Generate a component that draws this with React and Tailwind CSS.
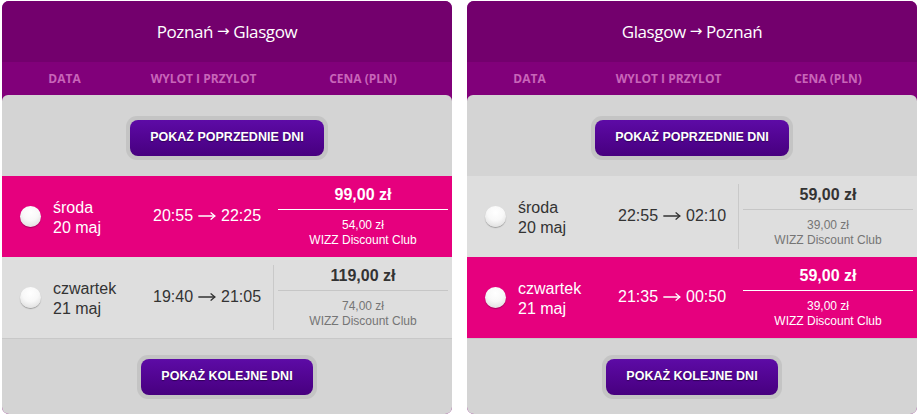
import React from "react";

const Arrow = ({ cls }) => (
  <span className={cls} style={{ fontFamily: '"DejaVu Sans", sans-serif' }}>→</span>
);

const TimeArrow = () => (
  <svg width="18" height="10" viewBox="0 0 18 10" className="mx-[5px] shrink-0" fill="none" stroke="currentColor" strokeWidth="1.3" strokeLinecap="round" strokeLinejoin="round">
    <path d="M0.8 5H16.8" />
    <path d="M13 1.8L16.8 5L13 8.2" />
  </svg>
);

const Radio = () => (
  <div className="w-[21px] h-[21px] rounded-full shrink-0 bg-[radial-gradient(circle_at_50%_30%,#ffffff_0%,#f8f8f8_45%,#d6d6d6_100%)] shadow-[0_1px_1px_rgba(0,0,0,0.3)]" />
);

const Button = ({ children, px }) => (
  <div className="rounded-[11px] bg-[#c4c4c4] p-[4px]">
    <div
      className={`h-[36px] rounded-[8px] bg-gradient-to-b from-[#5d0ba6] to-[#47007f] flex items-center justify-center text-white font-bold text-[12.5px] ${px}`}
      style={{ fontFamily: '"Liberation Sans", Arial, sans-serif', textShadow: "0 1px 1px rgba(0,0,0,0.4)" }}
    >
      {children}
    </div>
  </div>
);

const Time = ({ from, to }) => (
  <span className="flex items-center">
    {from}
    <TimeArrow />
    {to}
  </span>
);

const Row = ({ day, date, from, to, price, club, active }) => (
  <div
    className={`h-[81px] flex items-stretch ${active ? "bg-[#e6007e] text-white" : "bg-[#dedede] text-[#333]"}`}
    style={{ fontFamily: '"Liberation Sans", Arial, sans-serif' }}
  >
    <div className="pl-[18px] w-[151px] flex items-center gap-[12px] shrink-0">
      <Radio />
      <div className="text-[16px] leading-[20px] pt-[2px]">
        <div>{day}</div>
        <div>{date}</div>
      </div>
    </div>
    <div className="w-[120px] shrink-0 flex items-center text-[16px] pb-[1px]">
      <Time from={from} to={to} />
    </div>
    <div className="flex py-[8px]">
      <div className={`w-px ${active ? "" : "bg-[#c9c9c9]"}`} />
    </div>
    <div className="flex-1 pl-[4px] pr-[4px] flex flex-col">
      <div className={`pt-[7px] pb-[2px] border-b ${active ? "border-white" : "border-[#c6c6c6]"}`}>
        <div className="h-[24px] leading-[24px] text-center font-bold text-[16px]">{price}</div>
      </div>
      <div className={`pt-[8px] text-center text-[12px] leading-[15px] ${active ? "text-white" : "text-[#757575]"}`}>
        <div>{club}</div>
        <div>WIZZ Discount Club</div>
      </div>
    </div>
  </div>
);

const Panel = ({ a, b, rows }) => (
  <div className="w-[450px] h-[413px] rounded-[7px] bg-[#81007a] overflow-hidden flex flex-col">
    <div
      className="h-[61px] bg-[#73006d] flex items-center justify-center text-white text-[17px] tracking-[-0.4px]"
      style={{ fontFamily: '"Open Sans", sans-serif' }}
    >
      {a}&nbsp;<Arrow cls="text-[15px]" />&nbsp;{b}
    </div>
    <div
      className="h-[33px] flex items-center text-[12px] font-bold text-[#c865b9]"
      style={{ fontFamily: '"Open Sans", sans-serif' }}
    >
      <div className="w-[125px] text-center">DATA</div>
      <div className="w-[153px] text-center">WYLOT I PRZYLOT</div>
      <div className="flex-1 text-center pr-[6px]">CENA (PLN)</div>
    </div>
    <div className="flex-1 bg-[#d4d4d4] rounded-t-[6px] flex flex-col">
      <div className="h-[81px] flex items-center justify-center pt-[4px]">
        <Button px="px-[20px]">POKAŻ POPRZEDNIE DNI</Button>
      </div>
      {rows.map((r, i) => (
        <Row key={i} {...r} />
      ))}
      <div className="h-px bg-[#c8c8c8]" />
      <div className="flex-1 flex items-center justify-center">
        <Button px="px-[20px]">POKAŻ KOLEJNE DNI</Button>
      </div>
    </div>
  </div>
);

export default function App() {
  return (
    <div className="w-[919px] h-[416px] bg-white flex gap-[15px] pl-[2px] pt-[1px]">
      <Panel
        a="Poznań"
        b="Glasgow"
        rows={[
          { day: "środa", date: "20 maj", from: "20:55", to: "22:25", price: "99,00 zł", club: "54,00 zł", active: true },
          { day: "czwartek", date: "21 maj", from: "19:40", to: "21:05", price: "119,00 zł", club: "74,00 zł", active: false },
        ]}
      />
      <Panel
        a="Glasgow"
        b="Poznań"
        rows={[
          { day: "środa", date: "20 maj", from: "22:55", to: "02:10", price: "59,00 zł", club: "39,00 zł", active: false },
          { day: "czwartek", date: "21 maj", from: "21:35", to: "00:50", price: "59,00 zł", club: "39,00 zł", active: true },
        ]}
      />
    </div>
  );
}
